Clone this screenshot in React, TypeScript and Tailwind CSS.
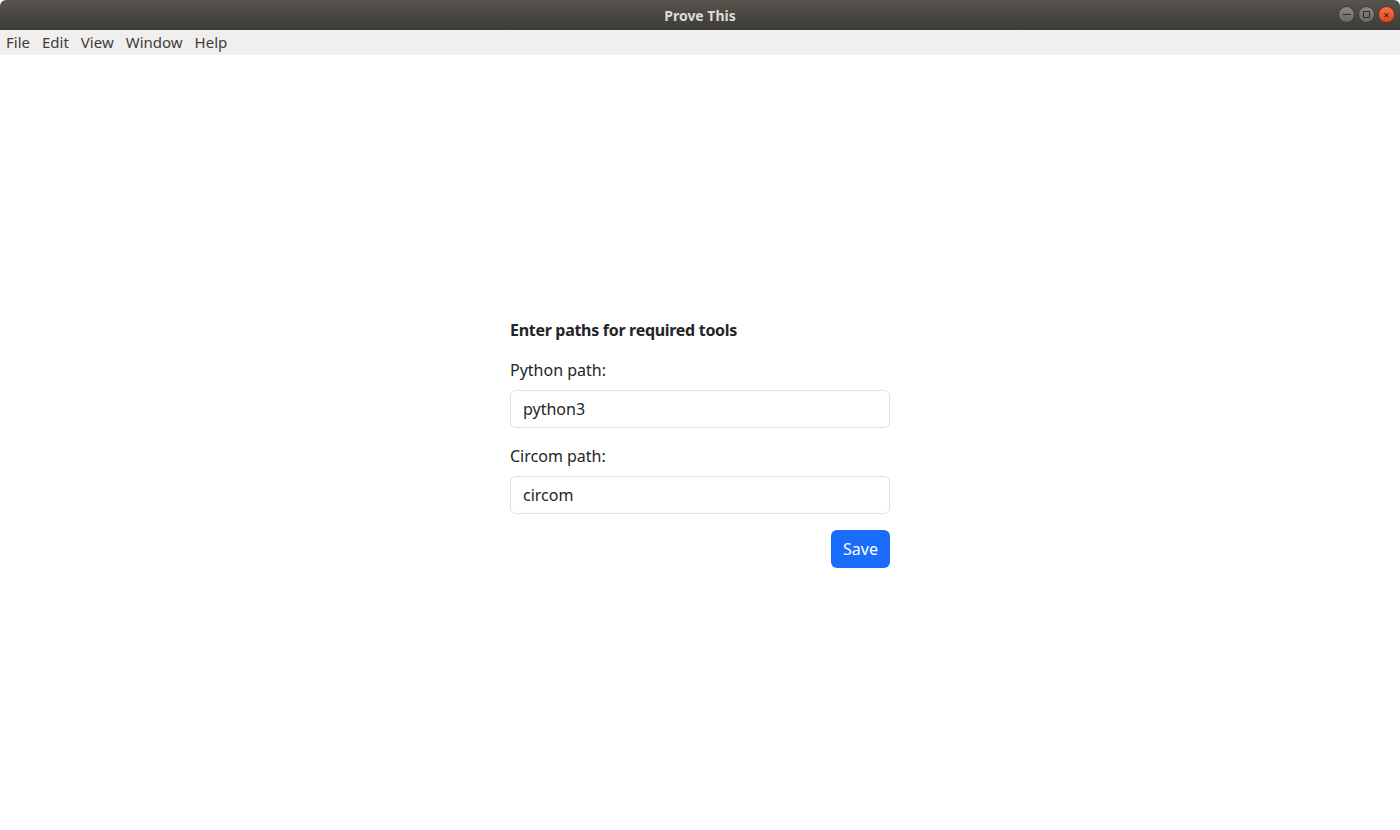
import { useState } from 'react';

const font = { fontFamily: '"Noto Sans", "Open Sans", sans-serif' };

function TitleBar() {
  return (
    <div className="relative flex h-[30px] items-center justify-center bg-gradient-to-b from-[#57544e] to-[#3c3b37] rounded-t-[6px]">
      <span className="text-[14px] font-bold text-[#dfdbd2]">Prove This</span>
      <div className="absolute right-[5px] top-[6px] flex gap-[3px]">
        <span className="flex h-[17px] w-[17px] items-center justify-center rounded-full border border-[#3a3935] bg-gradient-to-b from-[#8a8781] to-[#6a6863]">
          <span className="h-[1px] w-[8px] bg-[#2f2e2b]" />
        </span>
        <span className="flex h-[17px] w-[17px] items-center justify-center rounded-full border border-[#3a3935] bg-gradient-to-b from-[#8a8781] to-[#6a6863]">
          <span className="h-[7px] w-[7px] border border-[#2f2e2b]" />
        </span>
        <span className="flex h-[17px] w-[17px] items-center justify-center rounded-full border border-[#7a2d12] bg-gradient-to-b from-[#f0754a] to-[#de4a1a] text-[11px] leading-none text-[#3b1408]">
          ×
        </span>
      </div>
    </div>
  );
}

function MenuBar() {
  const items = ['File', 'Edit', 'View', 'Window', 'Help'];
  return (
    <div className="flex h-[25px] items-center gap-[12px] bg-[#f0efee] px-[6px] text-[15px] text-[#3c3c3c]">
      {items.map((m) => (
        <span key={m}>{m}</span>
      ))}
    </div>
  );
}

export default function App() {
  const [python, setPython] = useState('python3');
  const [circom, setCircom] = useState('circom');

  return (
    <div className="h-[830px] w-[1400px] overflow-hidden bg-white" style={font}>
      <TitleBar />
      <MenuBar />
      <main className="flex h-[775px] items-center justify-center">
        <form
          className="flex w-[380px] flex-col text-[16px] text-[#212529]"
          onSubmit={(e) => e.preventDefault()}
        >
          <h5 className="mb-[16px] text-[16px] font-bold leading-[24px] tracking-[-0.3px]">
            Enter paths for required tools
          </h5>
          <label className="mb-[8px] leading-[24px]">Python path:</label>
          <input
            value={python}
            onChange={(e) => setPython(e.target.value)}
            className="mb-[16px] h-[38px] rounded-[6px] border border-[#dee2e6] px-[12px] text-[16px] outline-none"
          />
          <label className="mb-[8px] leading-[24px]">Circom path:</label>
          <input
            value={circom}
            onChange={(e) => setCircom(e.target.value)}
            className="mb-[16px] h-[38px] rounded-[6px] border border-[#dee2e6] px-[12px] text-[16px] outline-none"
          />
          <div className="flex justify-end">
            <button
              type="submit"
              className="h-[38px] rounded-[6px] bg-[#1a6dfb] px-[12px] text-[16px] text-white"
            >
              Save
            </button>
          </div>
        </form>
      </main>
    </div>
  );
}
